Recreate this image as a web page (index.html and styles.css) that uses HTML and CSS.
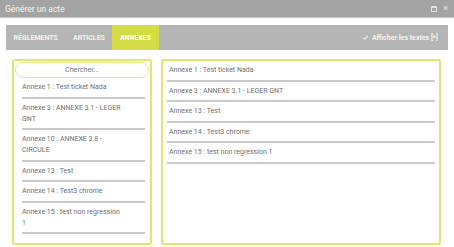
FILE: index.html
```html
<!DOCTYPE html>
<html lang="fr">
<head>
    <meta charset="UTF-8">
    <title>Générer un acte</title>
    <link rel="stylesheet" href="styles.css">
</head>
<body>

    <!-- Window title -->
    <div class="titlebar">
        <span class="title">Générer un acte</span>
        <span class="win-btns">
            <span class="btn-max"></span>
            <span class="btn-close">&#215;</span>
        </span>
    </div>

    <div class="content">
        <!-- Tabs -->
        <div class="tabs">
            <div class="tab">RÉGLEMENTS</div>
            <div class="tab">ARTICLES</div>
            <div class="tab active">ANNEXES</div>
            <label class="show-texts">
                <span class="check">
                    <svg width="7" height="7" viewBox="0 0 7 7"><path d="M1 3.6 L2.8 5.3 L6 1.6" fill="none" stroke="#eee" stroke-width="1.1"/></svg>
                </span>
                Afficher les textes [*]
            </label>
        </div>

        <!-- Panels -->
        <div class="panels">
            <div class="panel left">
                <div class="search">Chercher...</div>
                <ul class="list">
                    <li>Annexe 1 : Test ticket Nada</li>
                    <li>Annexe 3 : ANNEXE 3.1 - LEGER GNT</li>
                    <li>Annexe 10 : ANNEXE 3.8 - CIRCULE</li>
                    <li>Annexe 13 : Test</li>
                    <li>Annexe 14 : Test3 chrome</li>
                    <li>Annexe 15 : test non regression 1</li>
                </ul>
            </div>
            <div class="panel right">
                <ul class="list">
                    <li>Annexe 1 : Test ticket Nada</li>
                    <li>Annexe 3 : ANNEXE 3.1 - LEGER GNT</li>
                    <li>Annexe 13 : Test</li>
                    <li>Annexe 14 : Test3 chrome</li>
                    <li>Annexe 15 : test non regression 1</li>
                </ul>
            </div>
        </div>
    </div>

</body>
</html>
```

FILE: styles.css
```css
  body {
      margin: 0;
      font-family: Roboto, "Liberation Sans", sans-serif;
      background: #fff;
      color: #707070;
  }
  .titlebar {
      height: 17px;
      background: #a3a3a3;
      border-bottom: 1px solid #c6c6c6;
      display: flex;
      align-items: center;
      justify-content: space-between;
      padding: 0 6px 0 5px;
      color: #f4f4f4;
  }
  .title {
      font-size: 8.5px;
  }
  .win-btns {
      display: flex;
      align-items: center;
      gap: 6px;
  }
  .btn-max {
      width: 4px;
      height: 3px;
      border: 1px solid #e2e2e2;
      border-top-width: 2px;
  }
  .btn-close {
      font-size: 9px;
      line-height: 9px;
      color: #e6e6e6;
  }
  .content {
      padding: 7px 6px 0 6px;
  }
  .tabs {
      height: 25px;
      background: #b5b5b5;
      display: flex;
      align-items: stretch;
      font-size: 7px;
      font-weight: bold;
      color: #f2f2f2;
  }
  .tab {
      padding: 0 7.5px;
      display: flex;
      align-items: center;
  }
  .tab.active {
      background: #d3dc47;
      color: #fff;
  }
  .show-texts {
      margin-left: auto;
      padding-right: 10px;
      display: flex;
      align-items: center;
      gap: 3px;
  }
  .check {
      width: 7px;
      height: 7px;
      display: flex;
  }
  .panels {
      display: flex;
      gap: 9px;
      padding-left: 6px;
      margin-top: 9px;
  }
  .panel {
      height: 182px;
      border: 2px solid #dfe573;
      border-radius: 3px;
      background: #fff;
  }
  .panel.left {
      width: 136px;
  }
  .panel.right {
      width: 276px;
  }
  .search {
      margin: 1px 1px 0 1px;
      height: 14px;
      border: 1px solid #e3e88a;
      border-radius: 8px;
      text-align: center;
      font-size: 7.2px;
      line-height: 14px;
      color: #777;
  }
  .list {
      list-style: none;
      margin: 0;
      padding: 0 5px 0 8px;
      font-size: 7px;
  }
  .panel.right .list {
      padding: 0 4px 0 4px;
  }
  .list li {
      padding: 4px 0 3.5px 0;
      line-height: 11px;
      border-bottom: 2px solid #c9c9c9;
  }
  .panel.right .list li {
      padding-left: 2px;
  }
  .panel.left .list li {
      padding-right: 20px;
  }
```
